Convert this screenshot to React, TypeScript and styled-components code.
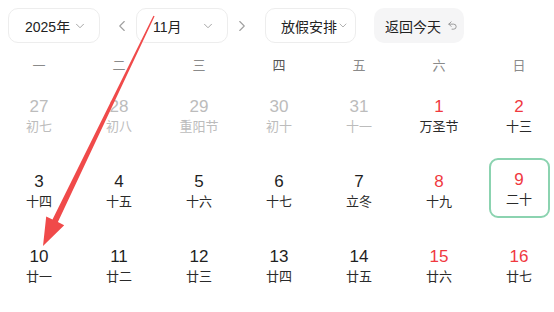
import React from "react"
import styled, { createGlobalStyle } from "styled-components"
import { ChevronDown, ChevronLeft, ChevronRight, Undo2 } from "lucide-react"

const GlobalStyle = createGlobalStyle`
  body {
    margin: 0;
    background: #fff;
    font-family: "Liberation Sans", "Noto Sans CJK SC", sans-serif;
    overflow: hidden;
  }
`

const Page = styled.div`
  position: relative;
  width: 554px;
  height: 312px;
  overflow: hidden;
`

const Toolbar = styled.div`
  display: flex;
  align-items: center;
  padding: 8px 8px 0;
  height: 35px;
  white-space: nowrap;

  & > * {
    flex-shrink: 0;
  }
`

const Select = styled.div<{ $w: number; $pl: number; $pr?: number }>`
  display: flex;
  align-items: center;
  justify-content: space-between;
  box-sizing: border-box;
  width: ${(p) => p.$w}px;
  height: 35px;
  padding: 0 ${(p) => p.$pr ?? 12}px 0 ${(p) => p.$pl}px;
  border: 1px solid #ededed;
  border-radius: 10px;
  font-size: 14px;
  color: #222;
`

const NavArrow = styled.div`
  display: flex;
  align-items: center;
  justify-content: center;
  width: 28px;
  height: 35px;
  color: #a0a0a0;
`

const TodayButton = styled.div`
  display: flex;
  align-items: center;
  gap: 6px;
  box-sizing: border-box;
  width: 90px;
  height: 35px;
  margin-left: 18px;
  padding: 0 0 0 11px;
  border-radius: 10px;
  background: #f5f5f6;
  font-size: 14px;
  color: #222;
`

const Grid = styled.div`
  display: grid;
  grid-template-columns: repeat(7, 80px);
  margin: 11px 0 0 -1px;
  row-gap: 15px;
`

const WeekDay = styled.div<{ $strong?: boolean }>`
  height: 24px;
  line-height: 24px;
  text-align: center;
  font-size: 13px;
  color: ${(p) => (p.$strong ? "#555" : "#8a8a8a")};
  margin-bottom: -10px;
`

const Cell = styled.div<{ $active?: boolean }>`
  justify-self: center;
  box-sizing: border-box;
  width: 61px;
  height: 60px;
  border: 2px solid ${(p) => (p.$active ? "#8bd3b0" : "transparent")};
  border-radius: 9px;
  text-align: center;
  padding-top: ${(p) => (p.$active ? 10 : 12)}px;
`

const DayNum = styled.div<{ $tone: string }>`
  height: 20px;
  line-height: 20px;
  font-size: 17px;
  color: ${(p) => p.$tone};
`

const Lunar = styled.div<{ $tone: string }>`
  height: 20px;
  line-height: 20px;
  font-size: 13px;
  color: ${(p) => p.$tone};
`

const ArrowLayer = styled.svg`
  position: absolute;
  left: 0;
  top: 0;
  pointer-events: none;
`

type Day = { n: number; l: string; muted?: boolean; red?: boolean; active?: boolean }

const days: Day[] = [
  { n: 27, l: "初七", muted: true },
  { n: 28, l: "初八", muted: true },
  { n: 29, l: "重阳节", muted: true },
  { n: 30, l: "初十", muted: true },
  { n: 31, l: "十一", muted: true },
  { n: 1, l: "万圣节", red: true },
  { n: 2, l: "十三", red: true },
  { n: 3, l: "十四" },
  { n: 4, l: "十五" },
  { n: 5, l: "十六" },
  { n: 6, l: "十七" },
  { n: 7, l: "立冬" },
  { n: 8, l: "十九", red: true },
  { n: 9, l: "二十", red: true, active: true },
  { n: 10, l: "廿一" },
  { n: 11, l: "廿二" },
  { n: 12, l: "廿三" },
  { n: 13, l: "廿四" },
  { n: 14, l: "廿五" },
  { n: 15, l: "廿六", red: true },
  { n: 16, l: "廿七", red: true },
]

const weekDays = ["一", "二", "三", "四", "五", "六", "日"]

export default function App() {
  return (
    <Page>
      <GlobalStyle />
      <Toolbar>
        <Select $w={92} $pl={16}>
          2025年
          <ChevronDown size={14} strokeWidth={1.5} color="#999" />
        </Select>
        <NavArrow style={{ marginLeft: 8 }}>
          <ChevronLeft size={18} strokeWidth={1.5} />
        </NavArrow>
        <Select $w={92} $pl={16}>
          11月
          <ChevronDown size={14} strokeWidth={1.5} color="#999" />
        </Select>
        <NavArrow>
          <ChevronRight size={18} strokeWidth={1.5} />
        </NavArrow>
        <Select $w={91} $pl={15} $pr={6} style={{ marginLeft: 9 }}>
          放假安排
          <ChevronDown size={13} strokeWidth={1.5} color="#999" />
        </Select>
        <TodayButton>
          返回今天
          <Undo2 size={11} strokeWidth={1.8} color="#888" />
        </TodayButton>
      </Toolbar>
      <Grid>
        {weekDays.map((w) => (
          <WeekDay key={w} $strong={w === "四"}>
            {w}
          </WeekDay>
        ))}
        {days.map((d, i) => (
          <Cell key={i} $active={d.active}>
            <DayNum $tone={d.muted ? "#bcbcbc" : d.red ? "#f0393f" : "#1f1f1f"}>{d.n}</DayNum>
            <Lunar $tone={d.muted ? "#bcbcbc" : "#2a2a2a"}>{d.l}</Lunar>
          </Cell>
        ))}
      </Grid>
      <ArrowLayer width={554} height={312}>
        <polygon
          points="154.6,16.3 57.9,222.1 64.2,225.2 43,246 46.2,216.4 52.5,219.5 153.4,15.7"
          fill="#f04a4a"
        />
      </ArrowLayer>
    </Page>
  )
}
